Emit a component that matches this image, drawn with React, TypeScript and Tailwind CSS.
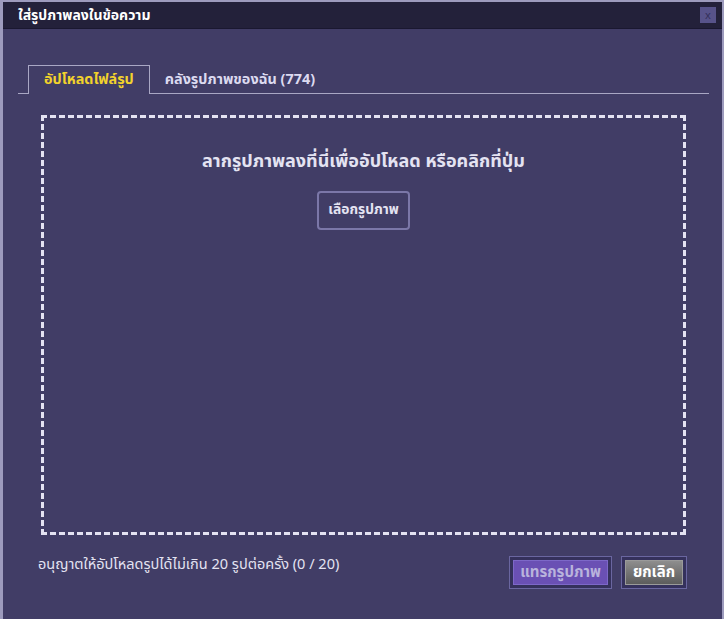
import React, { useState } from 'react';

export default function App() {
  const [tab, setTab] = useState<'upload' | 'library'>('upload');

  const font = { fontFamily: 'Tahoma, "Noto Sans Thai", "Noto Sans", "DejaVu Sans", sans-serif' };

  return (
    <div
      className="w-[724px] h-[619px] bg-[#413d66] border-l-[3px] border-t-2 border-r-2 border-[#9d9bbd] flex flex-col"
      style={font}
    >
      {/* Title bar */}
      <div className="h-[27px] bg-[#23213a] border-b border-[#1a1830] flex items-center justify-between pl-[15px] pr-[6px]">
        <h1 className="text-[14px] font-bold text-white">ใส่รูปภาพลงในข้อความ</h1>
        <button className="w-[16px] h-[16px] bg-[#57538a] text-[#33305a] text-[11px] leading-none flex items-center justify-center">
          x
        </button>
      </div>

      <div className="flex-1 flex flex-col px-[15px] pt-[37px]">
        {/* Tabs */}
        <div className="flex items-end border-b border-[#a9a7c4] mr-[-2px] pl-[10px] h-[28px]">
          <button
            onClick={() => setTab('upload')}
            className={`h-[29px] -mb-px px-[15px] text-[14.4px] font-bold ${
              tab === 'upload'
                ? 'border border-b-0 border-[#a9a7c4] bg-[#413d66] text-[#f2d22c]'
                : 'text-[#dcdaf0]'
            }`}
          >
            อัปโหลดไฟล์รูป
          </button>
          <button
            onClick={() => setTab('library')}
            className={`h-[29px] -mb-px px-[15px] text-[14.4px] font-bold ${
              tab === 'library'
                ? 'border border-b-0 border-[#a9a7c4] bg-[#413d66] text-[#f2d22c]'
                : 'text-[#dcdaf0]'
            }`}
          >
            คลังรูปภาพของฉัน (774)
          </button>
        </div>

        {/* Drop zone */}
        <div className="mt-[21px] ml-[23px] w-[645px] h-[420px] border-[3px] border-dashed border-[#e4e3f2] flex flex-col items-center pt-[30px]">
          <p className="text-[18px] font-bold text-[#e4e3f2]">ลากรูปภาพลงที่นี่เพื่ออัปโหลด หรือคลิกที่ปุ่ม</p>
          <button className="mt-[16px] w-[93px] h-[39px] border-2 border-[#7b77a8] rounded-[4px] text-[13.8px] font-bold text-[#e4e3f2]">
            เลือกรูปภาพ
          </button>
        </div>

        {/* Footer */}
        <div className="flex items-start justify-between mt-[20px] pl-[20px] pr-[20px]">
          <p className="text-[14.5px] text-[#e4e3f2] mt-[0px]">อนุญาตให้อัปโหลดรูปได้ไม่เกิน 20 รูปต่อครั้ง (0 / 20)</p>
          <div className="flex gap-[9px] mt-[1px]">
            <div className="border border-[#6a66a0] bg-[#35315c] p-[3px]">
              <button className="h-[25px] px-[6px] leading-none bg-[#6a50b4] border border-[#7d68c8] text-[15px] font-bold text-[#b9b3dc]">
                แทรกรูปภาพ
              </button>
            </div>
            <div className="border border-[#6a66a0] bg-[#35315c] p-[3px]">
              <button className="h-[25px] px-[7px] leading-none bg-gradient-to-b from-[#8e8e8e] to-[#5c5c5c] border border-[#9a9a9a] text-[15px] font-bold text-white">
                ยกเลิก
              </button>
            </div>
          </div>
        </div>
      </div>
    </div>
  );
}
